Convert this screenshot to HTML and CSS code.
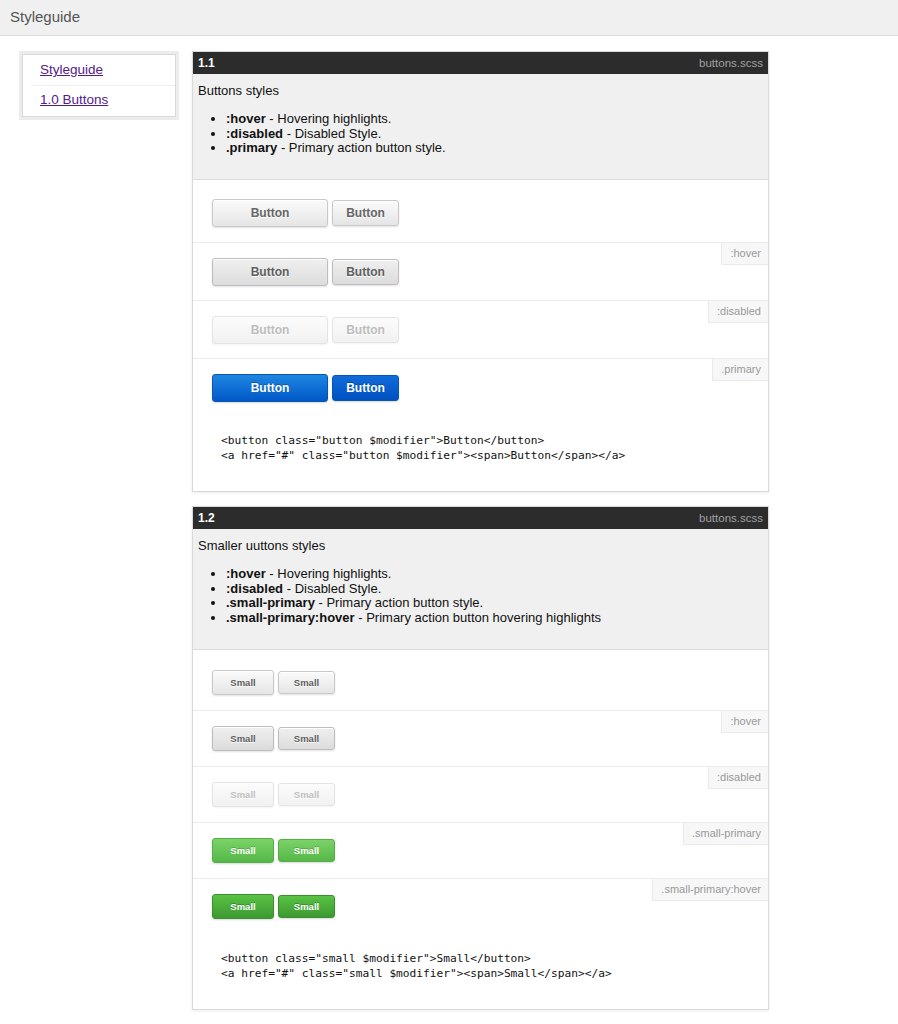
FILE: index.html
```html
<!DOCTYPE html>
<html>
<head>
<meta charset="utf-8">
<title>Styleguide</title>
<link rel="stylesheet" href="styles.css">
</head>
<body>
<header class="topbar"><span class="brand">Styleguide</span></header>
<div class="layout">
  <nav class="sidebar">
    <ul class="nav">
      <li><a href="#">Styleguide</a></li>
      <li><a href="#">1.0 Buttons</a></li>
    </ul>
  </nav>
  <main class="main">
    <section class="block block-lg">
      <div class="block-head"><span class="ref">1.1</span><span class="file">buttons.scss</span></div>
      <div class="desc">
        <p class="desc-title">Buttons styles</p>
        <ul class="mods">
          <li><strong>:hover</strong> - Hovering highlights.</li>
          <li><strong>:disabled</strong> - Disabled Style.</li>
          <li><strong>.primary</strong> - Primary action button style.</li>
        </ul>
      </div>
      <div class="ex ex-first">
        <button class="button">Button</button><a href="#" class="button button-link"><span>Button</span></a>
      </div>
      <div class="ex">
        <span class="tag">:hover</span>
        <button class="button is-hover">Button</button><a href="#" class="button button-link is-hover"><span>Button</span></a>
      </div>
      <div class="ex">
        <span class="tag">:disabled</span>
        <button class="button is-disabled">Button</button><a href="#" class="button button-link is-disabled"><span>Button</span></a>
      </div>
      <div class="ex">
        <span class="tag">.primary</span>
        <button class="button primary">Button</button><a href="#" class="button button-link primary primary-link"><span>Button</span></a>
      </div>
      <pre class="code">&lt;button class="button $modifier"&gt;Button&lt;/button&gt;
&lt;a href="#" class="button $modifier"&gt;&lt;span&gt;Button&lt;/span&gt;&lt;/a&gt;</pre>
    </section>

    <section class="block block-sm">
      <div class="block-head"><span class="ref">1.2</span><span class="file">buttons.scss</span></div>
      <div class="desc">
        <p class="desc-title">Smaller uuttons styles</p>
        <ul class="mods">
          <li><strong>:hover</strong> - Hovering highlights.</li>
          <li><strong>:disabled</strong> - Disabled Style.</li>
          <li><strong>.small-primary</strong> - Primary action button style.</li>
          <li><strong>.small-primary:hover</strong> - Primary action button hovering highlights</li>
        </ul>
      </div>
      <div class="ex ex-first">
        <button class="small">Small</button><a href="#" class="small small-link"><span>Small</span></a>
      </div>
      <div class="ex">
        <span class="tag">:hover</span>
        <button class="small is-hover">Small</button><a href="#" class="small small-link is-hover"><span>Small</span></a>
      </div>
      <div class="ex">
        <span class="tag">:disabled</span>
        <button class="small is-disabled">Small</button><a href="#" class="small small-link is-disabled"><span>Small</span></a>
      </div>
      <div class="ex">
        <span class="tag">.small-primary</span>
        <button class="small small-primary">Small</button><a href="#" class="small small-link small-primary"><span>Small</span></a>
      </div>
      <div class="ex">
        <span class="tag">.small-primary:hover</span>
        <button class="small small-primary-hover">Small</button><a href="#" class="small small-link small-primary-hover"><span>Small</span></a>
      </div>
      <pre class="code">&lt;button class="small $modifier"&gt;Small&lt;/button&gt;
&lt;a href="#" class="small $modifier"&gt;&lt;span&gt;Small&lt;/span&gt;&lt;/a&gt;</pre>
    </section>
  </main>
</div>
</body>
</html>
```

FILE: styles.css
```css
* { box-sizing: border-box; }

body {
  margin: 0;
  background: #fff;
  font-family: "Liberation Sans", Arial, Helvetica, sans-serif;
  font-size: 13px;
  color: #111;
}

.topbar {
  height: 36px;
  background: #f0f0f0;
  border-bottom: 1px solid #dcdcdc;
  padding-left: 10px;
}

.brand {
  display: block;
  font-size: 15px;
  line-height: 34px;
  color: #555;
}

.layout {
  display: flex;
  align-items: flex-start;
  gap: 13px;
  padding: 15px 0 0 19px;
}

.sidebar {
  width: 160px;
  padding: 3px;
  background: #ececec;
}

.nav {
  list-style: none;
  margin: 0;
  padding: 0;
  background: #fff;
  border: 1px solid #dadada;
}

.nav li {
  margin-left: 8px;
  padding-left: 9px;
  height: 30px;
  line-height: 29px;
}

.nav li + li {
  border-top: 1px solid #efefef;
  height: 31px;
  line-height: 27px;
}

.nav a {
  font-size: 13.5px;
  color: #551a8b;
  text-decoration: underline;
}

.main {
  width: 577px;
}

.block {
  border: 1px solid #d9d9d9;
  box-shadow: 0 1px 3px rgba(0, 0, 0, 0.08);
  background: #fff;
  margin-bottom: 14px;
}

.block-head {
  display: flex;
  justify-content: space-between;
  align-items: center;
  height: 22px;
  padding: 0 5px;
  background: #2c2c2c;
}

.ref {
  font-weight: bold;
  font-size: 12px;
  color: #fff;
}

.file {
  font-size: 11.5px;
  color: #a0a0a0;
}

.desc {
  background: #f0f0f0;
  border-bottom: 1px solid #dcdcdc;
  padding: 8px 5px 23.5px;
}

.desc-title {
  margin: 0;
  line-height: 18px;
  font-size: 13px;
}

.mods {
  margin: 12px 0 0;
  padding-left: 28px;
  line-height: 14.5px;
}

.ex {
  position: relative;
  display: flex;
  align-items: center;
  gap: 4px;
  padding: 15px 19px;
  border-top: 1px solid #ececec;
}

.ex-first {
  border-top: 0;
  padding-top: 20px;
}

.block-lg .ex { padding-bottom: 14px; }
.block-lg .ex-first { padding-top: 19px; padding-bottom: 15px; }

.tag {
  position: absolute;
  top: 0;
  right: 0;
  height: 22px;
  line-height: 21px;
  padding: 0 7px 0 8px;
  font-size: 11px;
  color: #999;
  background: #f7f7f7;
  border-left: 1px solid #eaeaea;
  border-bottom: 1px solid #eaeaea;
}

/* Large buttons */
.button {
  display: inline-flex;
  align-items: center;
  justify-content: center;
  width: 116px;
  height: 28px;
  padding: 0;
  font-family: "Liberation Sans", Arial, sans-serif;
  font-weight: bold;
  font-size: 12px;
  color: #666;
  text-decoration: none;
  text-shadow: 0 1px 0 #fff;
  border: 1px solid #c9c9c9;
  border-radius: 3px;
  background: linear-gradient(#fbfbfb, #e5e5e5);
  box-shadow: 0 1px 2px rgba(0, 0, 0, 0.12), inset 0 1px 0 #fff;
}

.button-link {
  width: 67px;
  height: 26px;
  padding: 0;
}

.button.is-hover {
  background: linear-gradient(#efefef, #dcdcdc);
  border-color: #bdbdbd;
  color: #5e5e5e;
}

.button.is-disabled {
  background: linear-gradient(#fcfcfc, #f1f1f1);
  border-color: #e4e4e4;
  color: #bdbdbd;
  box-shadow: 0 1px 2px rgba(0, 0, 0, 0.05);
}

.button.primary {
  background: linear-gradient(#1e87e0, #0058c8);
  border-color: #0a55b4;
  color: #fff;
  text-shadow: 0 -1px 0 rgba(0, 0, 0, 0.25);
  box-shadow: 0 1px 2px rgba(0, 0, 0, 0.15);
}

.button.primary-link {
  background: linear-gradient(#0f6cd8, #0050c0);
}

/* Small buttons */
.small {
  display: inline-flex;
  align-items: center;
  justify-content: center;
  width: 62px;
  height: 25px;
  padding: 0;
  font-family: "Liberation Sans", Arial, sans-serif;
  font-weight: bold;
  font-size: 9.5px;
  color: #5f5f5f;
  text-decoration: none;
  text-shadow: 0 1px 0 #fff;
  border: 1px solid #c9c9c9;
  border-radius: 3px;
  background: linear-gradient(#fbfbfb, #e5e5e5);
  box-shadow: 0 1px 2px rgba(0, 0, 0, 0.12), inset 0 1px 0 #fff;
}

.small-link {
  width: 57px;
  height: 23px;
}

.small.is-hover {
  background: linear-gradient(#efefef, #dcdcdc);
  border-color: #bdbdbd;
}

.small.is-disabled {
  background: linear-gradient(#fcfcfc, #f1f1f1);
  border-color: #e4e4e4;
  color: #c0c0c0;
  box-shadow: 0 1px 2px rgba(0, 0, 0, 0.05);
}

.small.small-primary {
  background: linear-gradient(#7bd368, #55b748);
  border-color: #55ad46;
  color: #fff;
  text-shadow: 0 -1px 0 rgba(0, 0, 0, 0.2);
  box-shadow: 0 1px 2px rgba(0, 0, 0, 0.15);
}

.small.small-primary-hover {
  background: linear-gradient(#59c244, #3c9a30);
  border-color: #3a8f2e;
  color: #fff;
  text-shadow: 0 -1px 0 rgba(0, 0, 0, 0.25);
  box-shadow: 0 1px 2px rgba(0, 0, 0, 0.15);
}

.code {
  margin: 0;
  padding: 17px 28px 28px;
  font-family: "DejaVu Sans Mono", "Liberation Mono", monospace;
  font-size: 11.2px;
  line-height: 15px;
  color: #111;
}
```
